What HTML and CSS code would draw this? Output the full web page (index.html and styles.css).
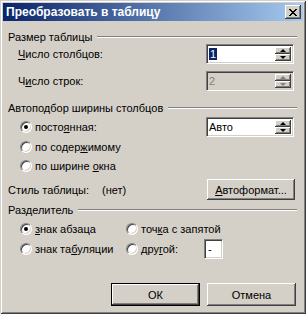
FILE: index.html
```html
<!DOCTYPE html>
<html lang="ru">
<head>
  <meta charset="UTF-8">
  <title>Преобразовать в таблицу</title>
  <link rel="stylesheet" href="styles.css">
</head>
<body>
  <div class="dialog">
    <div class="titlebar">
      <span class="title">Преобразовать в таблицу</span>
      <span class="close">
        <svg width="8" height="7" viewBox="0 0 8 7"><path d="M0 0h2v1h1v1h2v-1h1v-1h2v1h-1v1h-1v1h-1v1h1v1h1v1h1v1h-2v-1h-1v-1h-2v1h-1v1h-2v-1h1v-1h1v-1h1v-1h-1v-1h-1v-1h-1z" fill="#000"/></svg>
      </span>
    </div>

    <div class="body">
      <div class="group-head"><span>Размер таблицы</span><i class="etch"></i></div>

      <div class="field-row first">
        <span class="label"><u>Ч</u>исло столбцов:</span>
        <div class="spin">
          <div class="spin-text"><span class="sel">1</span></div>
          <div class="spin-btns">
            <span class="sb"><i class="up"></i></span>
            <span class="sb"><i class="down"></i></span>
          </div>
        </div>
      </div>

      <div class="field-row second">
        <span class="label">Ч<u>и</u>сло строк:</span>
        <div class="spin disabled">
          <div class="spin-text">2</div>
          <div class="spin-btns">
            <span class="sb"><i class="up"></i></span>
            <span class="sb"><i class="down"></i></span>
          </div>
        </div>
      </div>

      <div class="group-head g2"><span>Автоподбор ширины столбцов</span><i class="etch"></i></div>

      <div class="radio-row r1">
        <label class="opt"><span class="radio on"></span><span>посто<u>я</u>нная:</span></label>
        <div class="spin">
          <div class="spin-text">Авто</div>
          <div class="spin-btns">
            <span class="sb"><i class="up"></i></span>
            <span class="sb"><i class="down"></i></span>
          </div>
        </div>
      </div>
      <div class="radio-row r2">
        <label class="opt"><span class="radio"></span><span>по содер<u>ж</u>имому</span></label>
      </div>
      <div class="radio-row r3">
        <label class="opt"><span class="radio"></span><span>по ширине <u>о</u>кна</span></label>
      </div>

      <div class="style-row">
        <span class="label">Стиль таблицы:</span>
        <span class="style-name">(нет)</span>
        <button class="btn auto"><u>А</u>втоформат...</button>
      </div>

      <div class="group-head g3"><span>Разделитель</span><i class="etch"></i></div>

      <div class="sep-grid">
        <label class="opt"><span class="radio on"></span><span><u>з</u>нак абзаца</span></label>
        <label class="opt"><span class="radio"></span><span>точ<u>к</u>а с запятой</span></label>
        <label class="opt"><span class="radio"></span><span>знак та<u>б</u>уляции</span></label>
        <div class="other">
          <label class="opt"><span class="radio"></span><span>дру<u>г</u>ой:</span></label>
          <span class="char-box">-</span>
        </div>
      </div>

      <div class="actions">
        <button class="btn default">ОК</button>
        <button class="btn">Отмена</button>
      </div>
    </div>
  </div>
</body>
</html>
```

FILE: styles.css
```css
* {
  box-sizing: border-box;
}

body {
  margin: 0;
  padding: 0;
  font-family: "Liberation Sans", Arial, sans-serif;
  font-size: 11px;
  color: #000;
}

.dialog {
  width: 306px;
  height: 314px;
  background: #d4d0c8;
  padding: 3px;
  box-shadow: inset 1px 1px #d4d0c8, inset -1px -1px #404040,
              inset 2px 2px #fff, inset -2px -2px #808080;
}

/* title bar */
.titlebar {
  height: 18px;
  display: flex;
  align-items: center;
  justify-content: space-between;
  padding: 0 2px 0 3px;
  background: linear-gradient(to right, #0a246a, #a6caf0);
}

.title {
  color: #fff;
  font-weight: bold;
  font-size: 12px;
}

.close {
  width: 16px;
  height: 14px;
  display: flex;
  align-items: center;
  justify-content: center;
  background: #d4d0c8;
  box-shadow: inset -1px -1px #404040, inset 1px 1px #fff,
              inset -2px -2px #808080, inset 2px 2px #d4d0c8;
}

.close svg {
  display: block;
}

.body {
  padding: 0 6px 0 5px;
}

u {
  text-decoration: underline;
  text-underline-offset: 1px;
}

/* group headings with etched line */
.group-head {
  height: 14px;
  margin-top: 9px;
  display: flex;
  align-items: center;
}

.group-head .etch {
  flex: 1;
  height: 2px;
  margin-left: 5px;
  border-top: 1px solid #808080;
  border-bottom: 1px solid #fff;
}

.group-head.g2 {
  margin-top: 10px;
}

.group-head.g3 {
  margin-top: 3px;
}

.field-row {
  display: flex;
  align-items: center;
  justify-content: space-between;
  height: 20px;
  padding: 0 3px 0 10px;
}

.field-row.second {
  margin-top: 7px;
}

/* spin box */
.spin {
  width: 88px;
  height: 20px;
  display: flex;
  background: #fff;
  border: 1px solid;
  border-color: #808080 #fff #fff #808080;
  box-shadow: inset 1px 1px #404040, inset -1px -1px #d4d0c8;
  padding: 2px;
}

.spin-text {
  flex: 1;
  line-height: 14px;
  padding-left: 0;
}

.sel {
  background: #0a246a;
  color: #fff;
  padding: 0 1px;
}

.spin-btns {
  width: 16px;
  display: flex;
  flex-direction: column;
}

.sb {
  flex: 1;
  display: flex;
  align-items: center;
  justify-content: center;
  background: #d4d0c8;
  box-shadow: inset -1px -1px #404040, inset 1px 1px #fff,
              inset -2px -2px #808080;
}

.sb i {
  width: 0;
  height: 0;
  border-left: 3px solid transparent;
  border-right: 3px solid transparent;
}

.sb .up {
  border-bottom: 3px solid #000;
}

.sb .down {
  border-top: 3px solid #000;
}

.spin.disabled {
  background: #d4d0c8;
}

.spin.disabled .spin-text {
  color: #808080;
}

.spin.disabled .sb .up {
  border-bottom-color: #808080;
}

.spin.disabled .sb .down {
  border-top-color: #808080;
}

/* radios */
.radio-row {
  display: flex;
  align-items: center;
  justify-content: space-between;
  padding: 0 3px 0 12px;
  height: 19px;
}

.radio-row.r1 {
  height: 20px;
  margin-top: 2px;
}

.radio-row.r3 {
  height: 20px;
}

.opt {
  display: flex;
  align-items: center;
  gap: 3px;
}

.radio {
  width: 12px;
  height: 12px;
  border-radius: 50%;
  background: #fff;
  border: 1px solid;
  border-color: #808080 #fff #fff #808080;
  box-shadow: inset 1px 1px #404040, inset -1px -1px #d4d0c8;
  display: flex;
  align-items: center;
  justify-content: center;
}

.radio.on::after {
  content: "";
  width: 4px;
  height: 4px;
  border-radius: 50%;
  background: #000;
}

/* style row */
.style-row {
  display: flex;
  align-items: center;
  height: 21px;
  margin-top: 3px;
  padding-right: 2px;
}

.style-name {
  margin-left: 13px;
}

.btn {
  font: inherit;
  color: #000;
  height: 21px;
  padding: 0;
  border: none;
  background: #d4d0c8;
  box-shadow: inset -1px -1px #404040, inset 1px 1px #fff,
              inset -2px -2px #808080, inset 2px 2px #d4d0c8;
}

.btn.auto {
  width: 88px;
  margin-left: auto;
}

/* separator options */
.sep-grid {
  display: grid;
  grid-template-columns: 106px 1fr;
  grid-auto-rows: 20px;
  align-items: center;
  margin-top: 2px;
  padding-left: 12px;
}

.other {
  display: flex;
  align-items: center;
}

.char-box {
  width: 19px;
  height: 20px;
  margin-left: 26px;
  background: #fff;
  border: 1px solid;
  border-color: #808080 #fff #fff #808080;
  box-shadow: inset 1px 1px #404040, inset -1px -1px #d4d0c8;
  padding: 3px 0 0 3px;
  line-height: 12px;
}

.actions {
  display: flex;
  justify-content: flex-end;
  gap: 7px;
  margin-top: 24px;
  padding-right: 1px;
}

.actions .btn {
  width: 89px;
  height: 23px;
}

.btn.default {
  border: 1px solid #000;
  box-shadow: inset -1px -1px #404040, inset 1px 1px #fff,
              inset -2px -2px #808080;
}
```
